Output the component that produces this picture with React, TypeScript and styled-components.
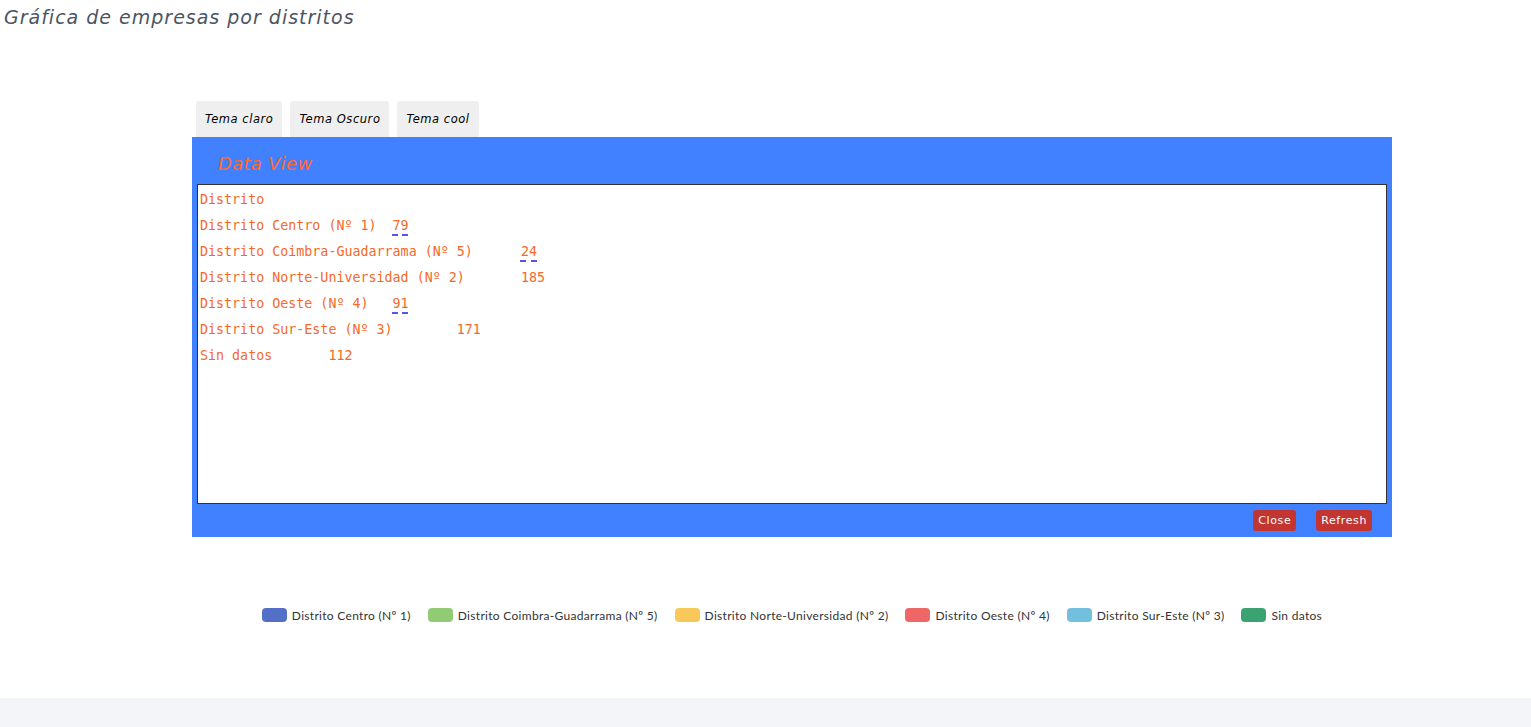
import styled, { createGlobalStyle } from "styled-components"

const GlobalStyle = createGlobalStyle`
    html, body {
        margin: 0;
        padding: 0;
        background: #ffffff;
    }
    body {
        font-family: "Lato", "DejaVu Sans", sans-serif;
    }
`

const rows: { name: string; value: number; flagged?: boolean }[] = [
    { name: "Distrito Centro (Nº 1)", value: 79, flagged: true },
    { name: "Distrito Coimbra-Guadarrama (Nº 5)", value: 24, flagged: true },
    { name: "Distrito Norte-Universidad (Nº 2)", value: 185 },
    { name: "Distrito Oeste (Nº 4)", value: 91, flagged: true },
    { name: "Distrito Sur-Este (Nº 3)", value: 171 },
    { name: "Sin datos", value: 112 },
]

const legend = [
    { name: "Distrito Centro (Nº 1)", color: "#5470c6" },
    { name: "Distrito Coimbra-Guadarrama (Nº 5)", color: "#91cc75" },
    { name: "Distrito Norte-Universidad (Nº 2)", color: "#fac858" },
    { name: "Distrito Oeste (Nº 4)", color: "#ee6666" },
    { name: "Distrito Sur-Este (Nº 3)", color: "#73c0de" },
    { name: "Sin datos", color: "#3ba272" },
]

const App = () => {
    return (
        <Page>
            <GlobalStyle />
            <Title>Gráfica de empresas por distritos</Title>
            <Chart>
                <Tabs>
                    <Tab>Tema claro</Tab>
                    <Tab>Tema Oscuro</Tab>
                    <Tab>Tema cool</Tab>
                </Tabs>
                <Panel>
                    <PanelTitle>Data View</PanelTitle>
                    <DataArea>
                        <Line>Distrito</Line>
                        {rows.map((r) => (
                            <Line key={r.name}>
                                {r.name}{"\t"}
                                {r.flagged ? <Flagged>{r.value}</Flagged> : r.value}
                            </Line>
                        ))}
                    </DataArea>
                    <PanelFooter>
                        <RedButton>Close</RedButton>
                        <RedButton>Refresh</RedButton>
                    </PanelFooter>
                </Panel>
                <Legend>
                    {legend.map((l) => (
                        <LegendItem key={l.name}>
                            <Swatch $color={l.color} />
                            <span>{l.name}</span>
                        </LegendItem>
                    ))}
                </Legend>
            </Chart>
            <Footer />
        </Page>
    )
}

export default App

const Page = styled.div`
    min-height: 100vh;
    display: flex;
    flex-direction: column;
`

const Title = styled.h1`
    margin: 0;
    padding: 4px 0 0 4px;
    height: 26px;
    font-family: "DejaVu Sans", sans-serif;
    font-style: italic;
    font-weight: normal;
    font-size: 19px;
    letter-spacing: 1px;
    line-height: 26px;
    color: #4a5564;
`

const Chart = styled.div`
    width: 1200px;
    margin: 71px 0 0 192px;
`

const Tabs = styled.div`
    display: flex;
    gap: 8px;
    padding-left: 4px;
`

const Tab = styled.button`
    height: 36px;
    padding: 0 9px;
    border: none;
    border-radius: 3px 3px 0 0;
    background: #efefef;
    font-family: "DejaVu Sans", sans-serif;
    font-style: italic;
    font-size: 11.5px;
    letter-spacing: 0.55px;
    color: #000;
`

const Panel = styled.div`
    height: 400px;
    background: #4180ff;
    display: flex;
    flex-direction: column;
`

const PanelTitle = styled.div`
    height: 47px;
    padding-left: 26px;
    line-height: 53px;
    font-family: "DejaVu Sans", sans-serif;
    font-style: italic;
    font-size: 18px;
    letter-spacing: 0.3px;
    color: #ff6a2b;
`

const DataArea = styled.div`
    margin: 0 5px;
    padding: 2px 2px 0;
    box-sizing: border-box;
    height: 320px;
    border: 1px solid #333;
    background: #fff;
    font-family: "DejaVu Sans Mono", monospace;
    font-size: 13.333px;
    line-height: 26px;
    color: #f5692a;
    white-space: pre;
    tab-size: 8;
`

const Line = styled.div`
    height: 26px;
`

const Flagged = styled.span`
    text-decoration: underline dashed #5b54e8;
    text-decoration-thickness: 2px;
    text-underline-offset: 4px;
`

const PanelFooter = styled.div`
    display: flex;
    justify-content: flex-end;
    gap: 20px;
    padding: 6px 20px 0 0;
`

const RedButton = styled.button`
    height: 21px;
    padding: 0 5px;
    border: none;
    border-radius: 3px;
    background: #c23531;
    color: #fff;
    font-family: "DejaVu Sans", sans-serif;
    font-size: 11px;
    letter-spacing: 0.6px;
`

const Legend = styled.div`
    display: flex;
    justify-content: center;
    gap: 17px;
    margin-top: 71px;
    height: 14px;
`

const LegendItem = styled.div`
    display: flex;
    align-items: center;
    gap: 5px;
    font-size: 12px;
    letter-spacing: 0.3px;
    color: #333;
`

const Swatch = styled.span<{ $color: string }>`
    width: 25px;
    height: 14px;
    border-radius: 4px;
    background: ${(p) => p.$color};
`

const Footer = styled.div`
    margin-top: auto;
    height: 29px;
    background: #f4f5f9;
`
